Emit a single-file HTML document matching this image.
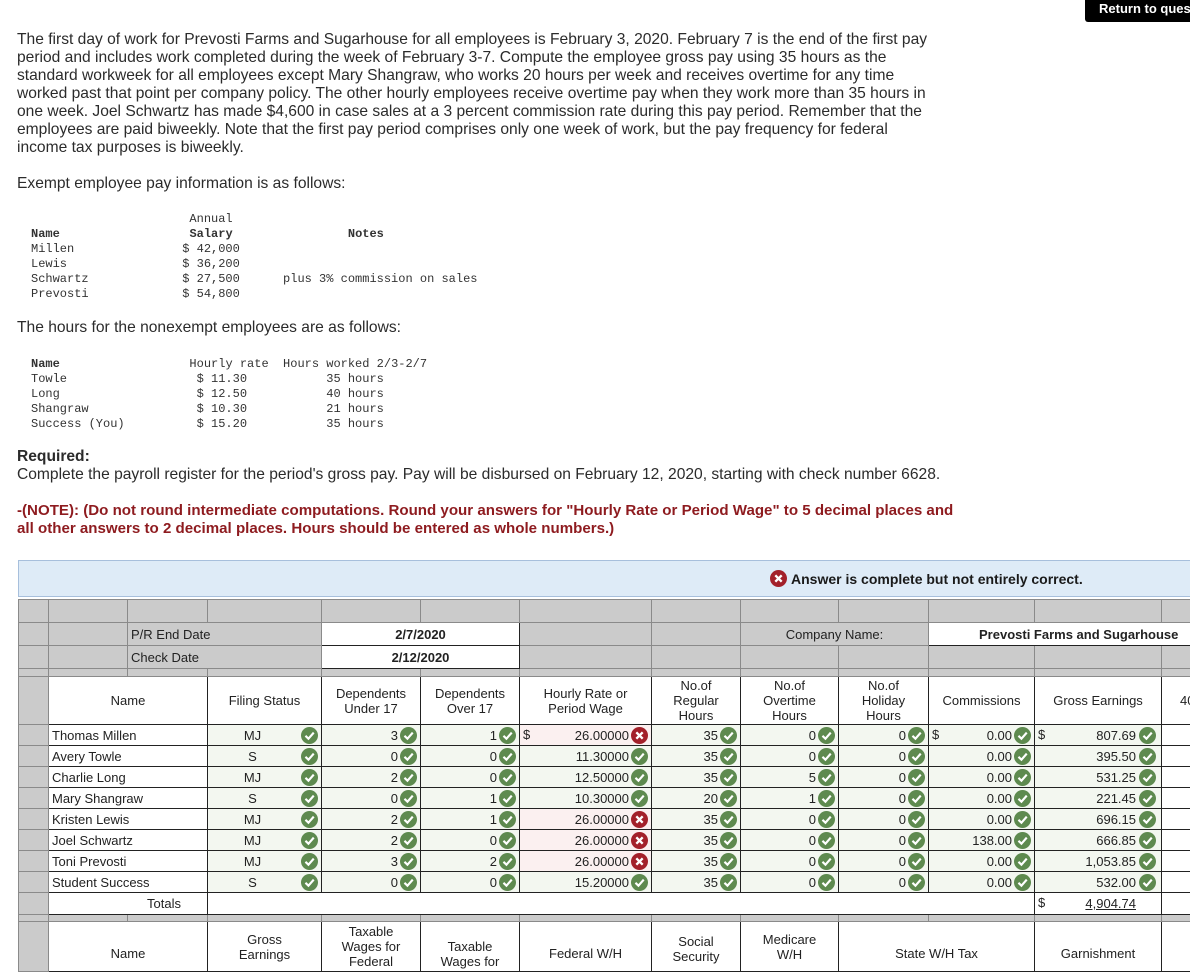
<!DOCTYPE html>
<html><head><meta charset="utf-8"><style>
body{margin:0;width:1190px;height:956px;overflow:hidden;background:#fff;font-family:"Liberation Sans",Arial,sans-serif;color:#2b2b2b;position:relative}
.p{position:absolute;left:17px;font-size:15.6px;line-height:18px;white-space:nowrap}
pre{position:absolute;left:31px;margin:0;font-family:"Liberation Mono",monospace;font-size:12px;line-height:15px;color:#333}
.btn{position:absolute;left:1085px;top:0;width:130px;height:22px;background:#000;border-radius:0 0 0 3px;color:#fff;font-weight:bold;font-size:13px;line-height:17px;padding-left:14px;box-sizing:border-box;white-space:nowrap;overflow:hidden}
.note{color:#8e1b1f;font-weight:bold;font-size:15.1px}
.blue{position:absolute;left:18px;top:560px;width:1180px;height:35px;background:#deebf7;border:1px solid #a7bfdc;border-right:none}
.blue .msg{position:absolute;left:751px;top:9px;font-weight:bold;font-size:14px;color:#1a1a1a;display:flex;align-items:center}
table{position:absolute;left:18px;top:599px;border-collapse:collapse;table-layout:fixed;width:1203px;font-size:13px;color:#222}
td{border:1px solid #8a8a8a;padding:0;background:#cbcbcb;overflow:hidden;white-space:nowrap;position:relative}
td.w{background:#fff;border-color:#222}
td.i{background:#f3f7f0;border-color:#222}
td.r{background:#fbf0f0;border-color:#222}
td.h{background:#fff;border-color:#222;text-align:center;line-height:15px;white-space:normal}
.v{text-align:right;padding-right:22px}
.c{text-align:center;padding-right:24px}
svg.k{position:absolute;right:3px;top:2px;width:17px;height:17px}
.d{position:absolute;left:3px;top:2px}
.u{text-decoration:underline}
</style></head><body>
<div class="btn">Return to question</div>
<div class="p" style="top:31px">The first day of work for Prevosti Farms and Sugarhouse for all employees is February 3, 2020. February 7 is the end of the first pay<br>period and includes work completed during the week of February 3-7. Compute the employee gross pay using 35 hours as the<br>standard workweek for all employees except Mary Shangraw, who works 20 hours per week and receives overtime for any time<br>worked past that point per company policy. The other hourly employees receive overtime pay when they work more than 35 hours in<br>one week. Joel Schwartz has made $4,600 in case sales at a 3 percent commission rate during this pay period. Remember that the<br>employees are paid biweekly. Note that the first pay period comprises only one week of work, but the pay frequency for federal<br>income tax purposes is biweekly.</div>
<div class="p" style="top:175px">Exempt employee pay information is as follows:</div>
<pre style="top:212px">                      Annual
<b>Name</b>                  <b>Salary</b>                <b>Notes</b>
Millen               $ 42,000
Lewis                $ 36,200
Schwartz             $ 27,500      plus 3% commission on sales
Prevosti             $ 54,800</pre>
<div class="p" style="top:319px">The hours for the nonexempt employees are as follows:</div>
<pre style="top:357px"><b>Name</b>                  Hourly rate  Hours worked 2/3-2/7
Towle                  $ 11.30           35 hours
Long                   $ 12.50           40 hours
Shangraw               $ 10.30           21 hours
Success (You)          $ 15.20           35 hours</pre>
<div class="p" style="top:448px"><b>Required:</b><br>Complete the payroll register for the period's gross pay. Pay will be disbursed on February 12, 2020, starting with check number 6628.</div>
<div class="p note" style="top:502px">-(NOTE): (Do not round intermediate computations. Round your answers for "Hourly Rate or Period Wage" to 5 decimal places and<br>all other answers to 2 decimal places. Hours should be entered as whole numbers.)</div>
<div class="blue"><div class="msg"><svg width="17" height="17" viewBox="0 0 16 16" style="margin-right:4px"><circle cx="8" cy="8" r="8" fill="#a3202a"/><path d="M5 5L11 11M11 5L5 11" stroke="#fff" stroke-width="2.2"/></svg>Answer is complete but not entirely correct.</div></div>
<svg width="0" height="0" style="position:absolute"><defs>
<g id="ok"><circle cx="8" cy="8" r="8" fill="#5e8a4f"/><path d="M4.2 8.3L7 11L12 5.3" stroke="#fff" stroke-width="2" fill="none"/></g>
<g id="no"><circle cx="8" cy="8" r="8" fill="#a3202a"/><path d="M5 5L11 11M11 5L5 11" stroke="#fff" stroke-width="2.2"/></g>
</defs></svg>
<table>
<colgroup><col style="width:30px"><col style="width:79px"><col style="width:80px"><col style="width:114px"><col style="width:99px"><col style="width:99px"><col style="width:132px"><col style="width:89px"><col style="width:98px"><col style="width:90px"><col style="width:106px"><col style="width:127px"><col style="width:60px"></colgroup>
<tr style="height:23px"><td></td><td></td><td></td><td></td><td></td><td></td><td></td><td></td><td></td><td></td><td></td><td></td><td></td></tr>
<tr style="height:23px"><td></td><td></td><td colspan="2" style="padding-left:3px">P/R End Date</td><td colspan="2" class="w" style="text-align:center;font-weight:bold">2/7/2020</td><td></td><td></td><td colspan="2" style="text-align:center">Company Name:</td><td colspan="3" class="w" style="text-align:left;padding-left:50px;font-weight:bold;border-right:none">Prevosti Farms and Sugarhouse</td></tr>
<tr style="height:23px"><td></td><td></td><td colspan="2" style="padding-left:3px">Check Date</td><td colspan="2" class="w" style="text-align:center;font-weight:bold">2/12/2020</td><td></td><td></td><td></td><td></td><td></td><td></td><td></td></tr>
<tr style="height:8px"><td></td><td></td><td></td><td></td><td></td><td></td><td></td><td></td><td></td><td></td><td></td><td></td><td></td></tr>
<tr style="height:48px"><td></td><td colspan="2" class="h">Name</td><td class="h">Filing Status</td><td class="h">Dependents<br>Under 17</td><td class="h">Dependents<br>Over 17</td><td class="h">Hourly Rate or<br>Period Wage</td><td class="h">No.of<br>Regular<br>Hours</td><td class="h">No.of<br>Overtime<br>Hours</td><td class="h">No.of<br>Holiday<br>Hours</td><td class="h">Commissions</td><td class="h">Gross Earnings</td><td class="h" style="text-align:left;padding-left:18px">40</td></tr>
<tr style="height:21px"><td></td><td colspan="2" class="w" style="padding-left:3px">Thomas Millen</td><td class="i c">MJ<svg class="k" viewBox="0 0 16 16"><use href="#ok"/></svg></td><td class="i v">3<svg class="k" viewBox="0 0 16 16"><use href="#ok"/></svg></td><td class="i v">1<svg class="k" viewBox="0 0 16 16"><use href="#ok"/></svg></td><td class="r v"><span class="d">$</span>26.00000<svg class="k" viewBox="0 0 16 16"><use href="#no"/></svg></td><td class="i v">35<svg class="k" viewBox="0 0 16 16"><use href="#ok"/></svg></td><td class="i v">0<svg class="k" viewBox="0 0 16 16"><use href="#ok"/></svg></td><td class="i v">0<svg class="k" viewBox="0 0 16 16"><use href="#ok"/></svg></td><td class="i v"><span class="d">$</span>0.00<svg class="k" viewBox="0 0 16 16"><use href="#ok"/></svg></td><td class="i v" style="padding-right:25px"><span class="d">$</span>807.69<svg class="k" viewBox="0 0 16 16" style="right:5px"><use href="#ok"/></svg></td><td class="w"></td></tr>
<tr style="height:21px"><td></td><td colspan="2" class="w" style="padding-left:3px">Avery Towle</td><td class="i c">S<svg class="k" viewBox="0 0 16 16"><use href="#ok"/></svg></td><td class="i v">0<svg class="k" viewBox="0 0 16 16"><use href="#ok"/></svg></td><td class="i v">0<svg class="k" viewBox="0 0 16 16"><use href="#ok"/></svg></td><td class="i v">11.30000<svg class="k" viewBox="0 0 16 16"><use href="#ok"/></svg></td><td class="i v">35<svg class="k" viewBox="0 0 16 16"><use href="#ok"/></svg></td><td class="i v">0<svg class="k" viewBox="0 0 16 16"><use href="#ok"/></svg></td><td class="i v">0<svg class="k" viewBox="0 0 16 16"><use href="#ok"/></svg></td><td class="i v">0.00<svg class="k" viewBox="0 0 16 16"><use href="#ok"/></svg></td><td class="i v" style="padding-right:25px">395.50<svg class="k" viewBox="0 0 16 16" style="right:5px"><use href="#ok"/></svg></td><td class="w"></td></tr>
<tr style="height:21px"><td></td><td colspan="2" class="w" style="padding-left:3px">Charlie Long</td><td class="i c">MJ<svg class="k" viewBox="0 0 16 16"><use href="#ok"/></svg></td><td class="i v">2<svg class="k" viewBox="0 0 16 16"><use href="#ok"/></svg></td><td class="i v">0<svg class="k" viewBox="0 0 16 16"><use href="#ok"/></svg></td><td class="i v">12.50000<svg class="k" viewBox="0 0 16 16"><use href="#ok"/></svg></td><td class="i v">35<svg class="k" viewBox="0 0 16 16"><use href="#ok"/></svg></td><td class="i v">5<svg class="k" viewBox="0 0 16 16"><use href="#ok"/></svg></td><td class="i v">0<svg class="k" viewBox="0 0 16 16"><use href="#ok"/></svg></td><td class="i v">0.00<svg class="k" viewBox="0 0 16 16"><use href="#ok"/></svg></td><td class="i v" style="padding-right:25px">531.25<svg class="k" viewBox="0 0 16 16" style="right:5px"><use href="#ok"/></svg></td><td class="w"></td></tr>
<tr style="height:21px"><td></td><td colspan="2" class="w" style="padding-left:3px">Mary Shangraw</td><td class="i c">S<svg class="k" viewBox="0 0 16 16"><use href="#ok"/></svg></td><td class="i v">0<svg class="k" viewBox="0 0 16 16"><use href="#ok"/></svg></td><td class="i v">1<svg class="k" viewBox="0 0 16 16"><use href="#ok"/></svg></td><td class="i v">10.30000<svg class="k" viewBox="0 0 16 16"><use href="#ok"/></svg></td><td class="i v">20<svg class="k" viewBox="0 0 16 16"><use href="#ok"/></svg></td><td class="i v">1<svg class="k" viewBox="0 0 16 16"><use href="#ok"/></svg></td><td class="i v">0<svg class="k" viewBox="0 0 16 16"><use href="#ok"/></svg></td><td class="i v">0.00<svg class="k" viewBox="0 0 16 16"><use href="#ok"/></svg></td><td class="i v" style="padding-right:25px">221.45<svg class="k" viewBox="0 0 16 16" style="right:5px"><use href="#ok"/></svg></td><td class="w"></td></tr>
<tr style="height:21px"><td></td><td colspan="2" class="w" style="padding-left:3px">Kristen Lewis</td><td class="i c">MJ<svg class="k" viewBox="0 0 16 16"><use href="#ok"/></svg></td><td class="i v">2<svg class="k" viewBox="0 0 16 16"><use href="#ok"/></svg></td><td class="i v">1<svg class="k" viewBox="0 0 16 16"><use href="#ok"/></svg></td><td class="r v">26.00000<svg class="k" viewBox="0 0 16 16"><use href="#no"/></svg></td><td class="i v">35<svg class="k" viewBox="0 0 16 16"><use href="#ok"/></svg></td><td class="i v">0<svg class="k" viewBox="0 0 16 16"><use href="#ok"/></svg></td><td class="i v">0<svg class="k" viewBox="0 0 16 16"><use href="#ok"/></svg></td><td class="i v">0.00<svg class="k" viewBox="0 0 16 16"><use href="#ok"/></svg></td><td class="i v" style="padding-right:25px">696.15<svg class="k" viewBox="0 0 16 16" style="right:5px"><use href="#ok"/></svg></td><td class="w"></td></tr>
<tr style="height:21px"><td></td><td colspan="2" class="w" style="padding-left:3px">Joel Schwartz</td><td class="i c">MJ<svg class="k" viewBox="0 0 16 16"><use href="#ok"/></svg></td><td class="i v">2<svg class="k" viewBox="0 0 16 16"><use href="#ok"/></svg></td><td class="i v">0<svg class="k" viewBox="0 0 16 16"><use href="#ok"/></svg></td><td class="r v">26.00000<svg class="k" viewBox="0 0 16 16"><use href="#no"/></svg></td><td class="i v">35<svg class="k" viewBox="0 0 16 16"><use href="#ok"/></svg></td><td class="i v">0<svg class="k" viewBox="0 0 16 16"><use href="#ok"/></svg></td><td class="i v">0<svg class="k" viewBox="0 0 16 16"><use href="#ok"/></svg></td><td class="i v">138.00<svg class="k" viewBox="0 0 16 16"><use href="#ok"/></svg></td><td class="i v" style="padding-right:25px">666.85<svg class="k" viewBox="0 0 16 16" style="right:5px"><use href="#ok"/></svg></td><td class="w"></td></tr>
<tr style="height:21px"><td></td><td colspan="2" class="w" style="padding-left:3px">Toni Prevosti</td><td class="i c">MJ<svg class="k" viewBox="0 0 16 16"><use href="#ok"/></svg></td><td class="i v">3<svg class="k" viewBox="0 0 16 16"><use href="#ok"/></svg></td><td class="i v">2<svg class="k" viewBox="0 0 16 16"><use href="#ok"/></svg></td><td class="r v">26.00000<svg class="k" viewBox="0 0 16 16"><use href="#no"/></svg></td><td class="i v">35<svg class="k" viewBox="0 0 16 16"><use href="#ok"/></svg></td><td class="i v">0<svg class="k" viewBox="0 0 16 16"><use href="#ok"/></svg></td><td class="i v">0<svg class="k" viewBox="0 0 16 16"><use href="#ok"/></svg></td><td class="i v">0.00<svg class="k" viewBox="0 0 16 16"><use href="#ok"/></svg></td><td class="i v" style="padding-right:25px">1,053.85<svg class="k" viewBox="0 0 16 16" style="right:5px"><use href="#ok"/></svg></td><td class="w"></td></tr>
<tr style="height:21px"><td></td><td colspan="2" class="w" style="padding-left:3px">Student Success</td><td class="i c">S<svg class="k" viewBox="0 0 16 16"><use href="#ok"/></svg></td><td class="i v">0<svg class="k" viewBox="0 0 16 16"><use href="#ok"/></svg></td><td class="i v">0<svg class="k" viewBox="0 0 16 16"><use href="#ok"/></svg></td><td class="i v">15.20000<svg class="k" viewBox="0 0 16 16"><use href="#ok"/></svg></td><td class="i v">35<svg class="k" viewBox="0 0 16 16"><use href="#ok"/></svg></td><td class="i v">0<svg class="k" viewBox="0 0 16 16"><use href="#ok"/></svg></td><td class="i v">0<svg class="k" viewBox="0 0 16 16"><use href="#ok"/></svg></td><td class="i v">0.00<svg class="k" viewBox="0 0 16 16"><use href="#ok"/></svg></td><td class="i v" style="padding-right:25px">532.00<svg class="k" viewBox="0 0 16 16" style="right:5px"><use href="#ok"/></svg></td><td class="w"></td></tr>
<tr style="height:22px"><td></td><td colspan="2" class="w" style="text-align:right;padding-right:26px">Totals</td><td colspan="8" class="w"></td><td class="w v" style="padding-right:25px"><span class="d">$</span><span class="u">4,904.74</span></td><td class="w"></td></tr>
<tr style="height:7px"><td></td><td></td><td></td><td></td><td></td><td></td><td></td><td></td><td></td><td></td><td></td><td></td><td></td></tr>
<tr style="height:50px"><td></td><td colspan="2" class="h" style="padding-top:14px">Name</td><td class="h">Gross<br>Earnings</td><td class="h" style="padding-top:0">Taxable<br>Wages for<br>Federal</td><td class="h" style="padding-top:14px">Taxable<br>Wages for</td><td class="h" style="padding-top:14px">Federal W/H</td><td class="h" style="padding-top:4px">Social<br>Security</td><td class="h">Medicare<br>W/H</td><td colspan="2" class="h" style="padding-top:14px">State W/H Tax</td><td class="h" style="padding-top:14px">Garnishment</td><td class="h"></td></tr>
</table>
</body></html>
